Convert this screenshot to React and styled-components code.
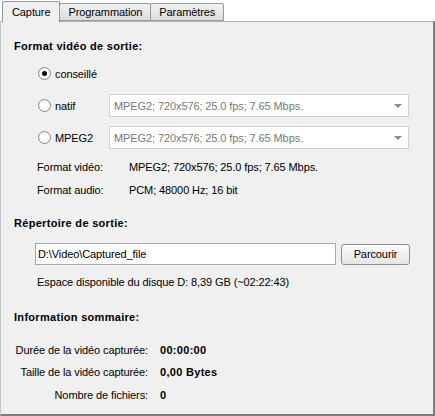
import React from "react";
import styled, { createGlobalStyle } from "styled-components";

const Global = createGlobalStyle`
  html, body {
    margin: 0;
    padding: 0;
    background: #fff;
  }
  body {
    font-family: "Liberation Sans", Tahoma, sans-serif;
    font-size: 11px;
    letter-spacing: -0.1px;
    color: #000;
  }
`;

const Frame = styled.div`
  width: 435px;
  height: 416px;
  display: flex;
  flex-direction: column;
  box-sizing: border-box;
`;

const TabStrip = styled.div`
  display: flex;
  align-items: flex-end;
  height: 21px;
  padding-left: 2px;
  position: relative;
  z-index: 1;
`;

const Tab = styled.div`
  box-sizing: border-box;
  height: ${(p) => (p.$active ? "21px" : "18px")};
  padding: 0 ${(p) => (p.$active ? "9px" : "8px")};
  display: flex;
  align-items: center;
  justify-content: center;
  border: 1px solid #919b9c;
  border-bottom: ${(p) => (p.$active ? "none" : "1px solid #919b9c")};
  border-right-color: ${(p) => (p.$active ? "#6f6f6f" : "#919b9c")};
  border-radius: 2px 2px 0 0;
  margin-left: ${(p) => (p.$first ? "0" : "-1px")};
  margin-bottom: ${(p) => (p.$active ? "-1px" : "0")};
  background: ${(p) =>
    p.$active ? "#f0f0f0" : "linear-gradient(#f2f2f2, #dcdcdc)"};
  font-size: 11px;
`;

const Panel = styled.div`
  flex: 1;
  box-sizing: border-box;
  background: #f0f0f0;
  border-top: 1px solid #b4b4b4;
  border-left: 1px solid #c8c8c8;
  border-right: 2px solid #7c7c7c;
  border-bottom: 2px solid #7c7c7c;
  padding-left: 13px;
  display: flex;
  flex-direction: column;
`;

const Title = styled.div`
  font-weight: bold;
  height: 16px;
  line-height: 16px;
  margin-top: ${(p) => p.$top}px;
  letter-spacing: 0.3px;
`;

const Row = styled.div`
  display: flex;
  align-items: center;
  height: ${(p) => p.$h || 16}px;
  margin-top: ${(p) => p.$top}px;
  padding-left: ${(p) => p.$indent || 0}px;
  white-space: nowrap;
`;

const RadioLabel = styled.label`
  display: flex;
  align-items: center;
  width: ${(p) => p.$w || 70}px;
`;

const RadioDot = styled.span`
  box-sizing: border-box;
  width: 13px;
  height: 13px;
  border-radius: 50%;
  border: 1px solid #8a8a8a;
  background: radial-gradient(circle at 50% 50%, #fff 40%, #e8e8e8 100%);
  margin-right: 4px;
  display: flex;
  align-items: center;
  justify-content: center;

  &::after {
    content: "";
    width: 5px;
    height: 5px;
    border-radius: 50%;
    background: ${(p) => (p.$checked ? "#000" : "transparent")};
  }
`;

const Combo = styled.div`
  box-sizing: border-box;
  width: 300px;
  height: 23px;
  background: #fff;
  border: 1px solid #cfcfcf;
  display: flex;
  align-items: center;
  justify-content: space-between;
  padding: 0 6px 0 4px;
  color: #7a7a7a;
`;

const Arrow = styled.span`
  width: 0;
  height: 0;
  border-left: 4px solid transparent;
  border-right: 4px solid transparent;
  border-top: 4px solid #8a8a8a;
  margin-top: 1px;
`;

const InfoKey = styled.span`
  width: 92px;
`;

const TextInput = styled.div`
  box-sizing: border-box;
  width: 301px;
  height: 22px;
  background: #fff;
  border: 1px solid #a9a9a9;
  display: flex;
  align-items: center;
  padding-left: 2px;
`;

const Button = styled.div`
  box-sizing: border-box;
  width: 69px;
  height: 21px;
  margin-left: 5px;
  border: 1px solid #8e8e8e;
  border-radius: 3px;
  background: linear-gradient(#fcfcfc, #e6e6e6);
  display: flex;
  align-items: center;
  justify-content: center;
`;

const SumKey = styled.span`
  width: 134px;
  flex-shrink: 0;
  display: flex;
  justify-content: flex-end;
  margin-right: 12px;
`;

const SumValue = styled.span`
  font-weight: bold;
  letter-spacing: 0.3px;
`;

const formats = "MPEG2; 720x576; 25.0 fps; 7.65 Mbps.";

const summary = [
  ["Durée de la vidéo capturée:", "00:00:00", 17],
  ["Taille de la vidéo capturée:", "0,00 Bytes", 6],
  ["Nombre de fichiers:", "0", 7],
];

export default function App() {
  return (
    <>
      <Global />
      <Frame>
        <TabStrip>
          <Tab $active $first>Capture</Tab>
          <Tab>Programmation</Tab>
          <Tab>Paramètres</Tab>
        </TabStrip>
        <Panel>
          <Title $top={16}>Format vidéo de sortie:</Title>

          <Row $h={23} $top={8} $indent={24}>
            <RadioLabel>
              <RadioDot $checked />
              conseillé
            </RadioLabel>
          </Row>
          <Row $h={23} $top={9} $indent={24}>
            <RadioLabel $w={71}>
              <RadioDot />
              natif
            </RadioLabel>
            <Combo>
              {formats}
              <Arrow />
            </Combo>
          </Row>
          <Row $h={23} $top={9} $indent={24}>
            <RadioLabel $w={71}>
              <RadioDot />
              MPEG2
            </RadioLabel>
            <Combo>
              {formats}
              <Arrow />
            </Combo>
          </Row>

          <Row $top={10} $indent={23}>
            <InfoKey>Format vidéo:</InfoKey>
            {formats}
          </Row>
          <Row $top={7} $indent={23}>
            <InfoKey>Format audio:</InfoKey>
            PCM; 48000 Hz; 16 bit
          </Row>

          <Title $top={17}>Répertoire de sortie:</Title>
          <Row $h={22} $top={12} $indent={21}>
            <TextInput>D:\Video\Captured_file</TextInput>
            <Button>Parcourir</Button>
          </Row>
          <Row $top={9} $indent={23}>
            Espace disponible du disque D: 8,39 GB (~02:22:43)
          </Row>

          <Title $top={19}>Information sommaire:</Title>
          {summary.map(([k, v, top]) => (
            <Row key={k} $top={top}>
              <SumKey>{k}</SumKey>
              <SumValue>{v}</SumValue>
            </Row>
          ))}
        </Panel>
      </Frame>
    </>
  );
}
